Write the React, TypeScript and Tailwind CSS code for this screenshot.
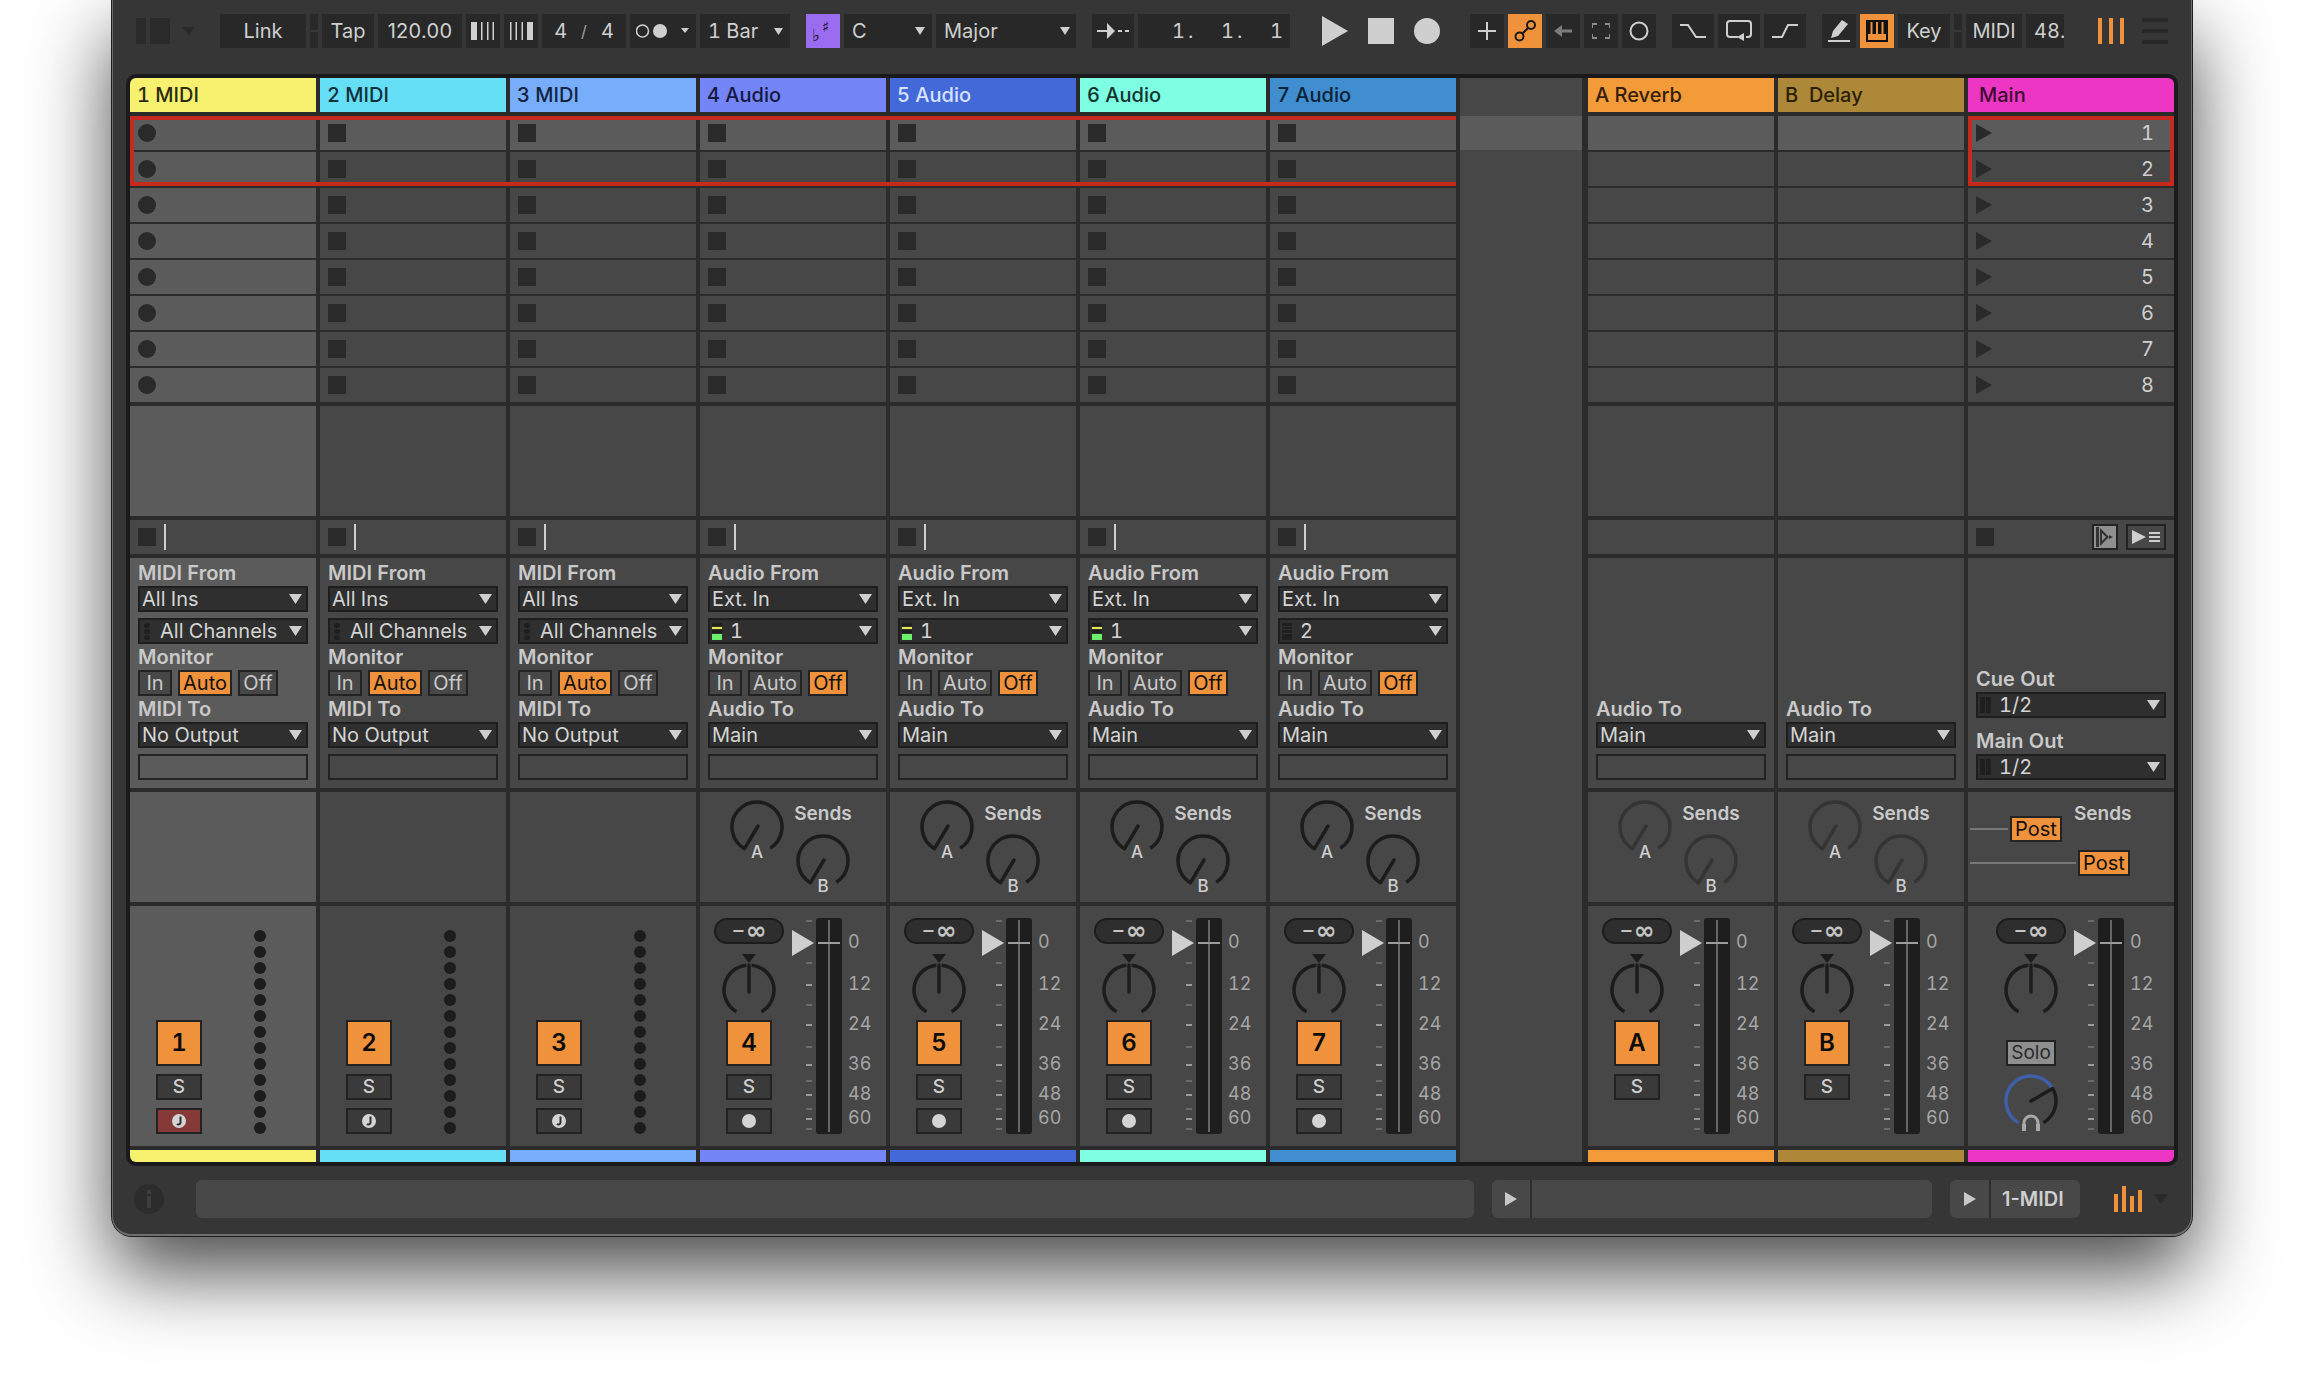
import React from 'react';

const ORANGE = '#f0923b';

type Track = {
  id: string;
  name: string;
  color: string;
  text: string;
  kind: 'midi' | 'audio' | 'return';
  input?: string;
  meter?: 'on' | 'off';
};

const tracks: Track[] = [
  { id: '1', name: '1 MIDI', color: '#f6f270', text: '#2c2b14', kind: 'midi' },
  { id: '2', name: '2 MIDI', color: '#64dff6', text: '#12303a', kind: 'midi' },
  { id: '3', name: '3 MIDI', color: '#77adfb', text: '#14243f', kind: 'midi' },
  { id: '4', name: '4 Audio', color: '#7486f7', text: '#14193f', kind: 'audio', input: '1', meter: 'on' },
  { id: '5', name: '5 Audio', color: '#4368d8', text: '#d8e2ff', kind: 'audio', input: '1', meter: 'on' },
  { id: '6', name: '6 Audio', color: '#7effe3', text: '#12332c', kind: 'audio', input: '1', meter: 'on' },
  { id: '7', name: '7 Audio', color: '#408dcf', text: '#0c2236', kind: 'audio', input: '2', meter: 'off' },
];

const returns: Track[] = [
  { id: 'A', name: 'A Reverb', color: '#f39b39', text: '#33200b', kind: 'return' },
  { id: 'B', name: 'B  Delay', color: '#ad8838', text: '#2a1f08', kind: 'return' },
];

const rows = [1, 2, 3, 4, 5, 6, 7, 8];
const dbLabels = ['0', '12', '24', '36', '48', '60'];
const ticks = [3, 45, 67, 87, 107, 129, 147, 163, 177, 191, 201, 211];
const brightTicks = [67, 107, 147, 177, 201];

function polar(cx: number, cy: number, r: number, deg: number) {
  const a = ((deg - 90) * Math.PI) / 180;
  return { x: cx + r * Math.cos(a), y: cy + r * Math.sin(a) };
}

function arc(cx: number, cy: number, r: number, from: number, to: number) {
  const s = polar(cx, cy, r, from);
  const e = polar(cx, cy, r, to);
  const large = to - from > 180 ? 1 : 0;
  return `M${s.x} ${s.y}A${r} ${r} 0 ${large} 1 ${e.x} ${e.y}`;
}

function Tri({ className = 'w-[11px] h-[8px]', fill = '#cfcfcf' }: { className?: string; fill?: string }) {
  return (
    <svg viewBox="0 0 12 8" preserveAspectRatio="none" className={className}>
      <polygon points="0,0 12,0 6,8" fill={fill} />
    </svg>
  );
}

function PlayTri({ className, fill }: { className: string; fill: string }) {
  return (
    <svg viewBox="0 0 16 18" preserveAspectRatio="none" className={className}>
      <polygon points="0,0 16,9 0,18" fill={fill} />
    </svg>
  );
}

function Btn({ className = '', children }: { className?: string; children?: React.ReactNode }) {
  return (
    <div className={`h-[34px] bg-[#282828] flex items-center justify-center text-[20px] text-[#cfcfcf] shrink-0 ${className}`}>
      {children}
    </div>
  );
}

function SplitIndicator({ className = '' }: { className?: string }) {
  return (
    <div className={`h-[34px] flex flex-col gap-[2px] shrink-0 ${className}`}>
      <div className="h-[16px] bg-[#282828]" />
      <div className="h-[16px] bg-[#282828]" />
    </div>
  );
}

function Toolbar() {
  return (
    <div className="flex items-center gap-[4px] pl-[24px] pt-[14px] h-[48px]">
      <div className="flex gap-[4px] h-[26px] w-[34px] shrink-0">
        <div className="w-[10px] bg-[#2a2a2a]" />
        <div className="w-[20px] bg-[#2a2a2a]" />
      </div>
      <Tri className="ml-[8px] w-[13px] h-[8px] shrink-0" fill="#2a2a2a" />
      <Btn className="ml-[21px] w-[86px]">Link</Btn>
      <SplitIndicator className="w-[8px]" />
      <Btn className="w-[52px]">Tap</Btn>
      <Btn className="w-[84px] [font-variant-numeric:normal] tracking-[0.3px]">120.00</Btn>
      <Btn className="w-[34px]">
        <svg width="24" height="18" viewBox="0 0 24 18" fill="#cfcfcf">
          <rect x="0" width="6" height="18" />
          <rect x="10" width="1.5" height="18" />
          <rect x="16" width="1.5" height="18" />
          <rect x="21.5" width="1.5" height="18" />
        </svg>
      </Btn>
      <Btn className="w-[34px]">
        <svg width="24" height="18" viewBox="0 0 24 18" fill="#cfcfcf">
          <rect x="1" width="1.5" height="18" />
          <rect x="6.5" width="1.5" height="18" />
          <rect x="12.5" width="1.5" height="18" />
          <rect x="18" width="6" height="18" />
        </svg>
      </Btn>
      <Btn className="w-[84px] gap-[14px]">
        <span>4</span>
        <span className="text-[16px] text-[#a0a0a0]">/</span>
        <span>4</span>
      </Btn>
      <Btn className="w-[66px]">
        <svg width="54" height="16" viewBox="0 0 54 16">
          <circle cx="6.5" cy="8" r="6" fill="none" stroke="#cfcfcf" strokeWidth="1.5" />
          <circle cx="24" cy="8" r="7" fill="#cfcfcf" />
          <polygon points="45,5 53,5 49,10" fill="#cfcfcf" />
        </svg>
      </Btn>
      <Btn className="w-[90px] justify-start pl-[8px]">
        <span>1 Bar</span>
        <Tri className="ml-auto mr-[7px] w-[9px] h-[7px]" />
      </Btn>
      <Btn className="ml-[12px] w-[34px] !bg-[#9a6cf0] relative [font-family:'DejaVu_Sans',sans-serif]">
        <span className="absolute left-[6px] top-[11px] text-[17px] font-bold leading-[20px] text-[#15102a]">♭</span>
        <span className="absolute left-[16px] top-[3px] text-[15px] font-bold leading-[20px] text-[#15102a]">♯</span>
      </Btn>
      <Btn className="w-[88px] justify-start pl-[8px]">
        <span>C</span>
        <Tri className="ml-auto mr-[7px] w-[10px] h-[8px]" />
      </Btn>
      <Btn className="w-[140px] justify-start pl-[8px]">
        <span>Major</span>
        <Tri className="ml-auto mr-[6px] w-[10px] h-[8px]" />
      </Btn>
      <Btn className="ml-[12px] w-[42px]">
        <svg width="32" height="16" viewBox="0 0 32 16">
          <path d="M0 8h12" stroke="#cfcfcf" strokeWidth="2" />
          <polygon points="10,0 18,8 10,16" fill="#cfcfcf" />
          <path d="M21 8h4M28 8h4" stroke="#cfcfcf" strokeWidth="2" />
        </svg>
      </Btn>
      <Btn className="w-[152px] justify-start pl-[34px] tracking-[3px]">
        <span className="w-[49px]">1.</span>
        <span className="w-[49px]">1.</span>
        <span>1</span>
      </Btn>
      <svg width="26" height="30" viewBox="0 0 26 30" className="ml-[28px] shrink-0">
        <polygon points="0,0 26,15 0,30" fill="#cfcfcf" />
      </svg>
      <div className="ml-[16px] w-[26px] h-[26px] bg-[#cfcfcf] shrink-0" />
      <div className="ml-[16px] w-[26px] h-[26px] rounded-full bg-[#cfcfcf] shrink-0" />
      <Btn className="ml-[26px] w-[34px]">
        <svg width="18" height="18" viewBox="0 0 18 18" stroke="#cfcfcf" strokeWidth="2">
          <path d="M9 0v18M0 9h18" />
        </svg>
      </Btn>
      <Btn className="w-[34px] !bg-[#f0923b]">
        <svg width="24" height="24" viewBox="0 0 24 24" fill="none" stroke="#1a1a1a" strokeWidth="2">
          <circle cx="6.5" cy="17.5" r="4" />
          <circle cx="18" cy="6" r="4" />
          <path d="M9.5 14.5l5.5-5.5" />
        </svg>
      </Btn>
      <Btn className="w-[34px]">
        <svg width="18" height="12" viewBox="0 0 18 12">
          <polygon points="0,6 8,0 8,12" fill="#7c7c7c" />
          <rect x="7" y="4.5" width="11" height="3" fill="#7c7c7c" />
        </svg>
      </Btn>
      <Btn className="w-[34px]">
        <svg width="18" height="16" viewBox="0 0 18 16" fill="none" stroke="#8c8c8c" strokeWidth="2">
          <path d="M0 5V1h5M13 1h5v4M18 11v4h-5M5 15H0v-4" />
        </svg>
      </Btn>
      <Btn className="w-[34px]">
        <svg width="20" height="20" viewBox="0 0 20 20" fill="none" stroke="#cfcfcf" strokeWidth="2">
          <circle cx="10" cy="10" r="8.5" />
        </svg>
      </Btn>
      <Btn className="ml-[12px] w-[42px]">
        <svg width="26" height="14" viewBox="0 0 26 14" fill="none" stroke="#cfcfcf" strokeWidth="2">
          <path d="M0 1h8l8 12h10" />
        </svg>
      </Btn>
      <Btn className="w-[42px]">
        <svg width="26" height="22" viewBox="0 0 26 22" fill="none" stroke="#cfcfcf" strokeWidth="2">
          <path d="M12 17H4a3 3 0 0 1-3-3V4a3 3 0 0 1 3-3h18a3 3 0 0 1 3 3v10a3 3 0 0 1-3 3h-2" />
          <polygon points="18,13 18,21 11,17" fill="#cfcfcf" stroke="none" />
        </svg>
      </Btn>
      <Btn className="w-[42px]">
        <svg width="26" height="14" viewBox="0 0 26 14" fill="none" stroke="#cfcfcf" strokeWidth="2">
          <path d="M0 13h10l6-12h10" />
        </svg>
      </Btn>
      <Btn className="ml-[12px] w-[34px]">
        <svg width="22" height="22" viewBox="0 0 22 22">
          <polygon points="14,0 20,4 10,16 3,18 5,11" fill="#cfcfcf" />
          <rect x="0" y="20" width="22" height="2" fill="#cfcfcf" />
        </svg>
      </Btn>
      <Btn className="w-[34px] !bg-[#f0923b]">
        <svg width="22" height="22" viewBox="0 0 22 22">
          <rect x="0" y="0" width="22" height="22" fill="#111" />
          <rect x="2" y="14" width="18" height="6" fill="#f0923b" />
          <rect x="4.5" y="2" width="2" height="12" fill="#f0923b" />
          <rect x="10" y="2" width="2" height="12" fill="#f0923b" />
          <rect x="15.5" y="2" width="2" height="12" fill="#f0923b" />
        </svg>
      </Btn>
      <Btn className="w-[52px]">Key</Btn>
      <SplitIndicator className="w-[8px]" />
      <Btn className="w-[56px]">MIDI</Btn>
      <Btn className="w-[38px] justify-start pl-[8px] overflow-hidden">48.</Btn>
      <div className="ml-[30px] flex justify-between w-[26px] h-[26px] shrink-0">
        <div className="w-[4px] bg-[#f0923b]" />
        <div className="w-[4px] bg-[#f0923b]" />
        <div className="w-[4px] bg-[#f0923b]" />
      </div>
      <div className="ml-[14px] flex flex-col justify-between w-[26px] h-[26px] shrink-0">
        <div className="h-[4px] bg-[#282828]" />
        <div className="h-[4px] bg-[#282828]" />
        <div className="h-[4px] bg-[#282828]" />
      </div>
    </div>
  );
}

function Header({ track }: { track: Track }) {
  return (
    <div
      className="h-[34px] px-[7px] text-[20px] font-medium leading-[34px] whitespace-pre"
      style={{ background: track.color, color: track.text }}
    >
      {track.name}
    </div>
  );
}

function ClipRow({ row, light, kind }: { row: number; light: boolean; kind: 'rec' | 'stop' | 'none' }) {
  return (
    <div className={`h-[34px] flex items-center pl-[8px] ${light ? 'bg-[#5b5b5b]' : 'bg-[#474747]'}`} data-row={row}>
      {kind === 'rec' && <div className="w-[18px] h-[18px] rounded-full bg-[#2a2a2a]" />}
      {kind === 'stop' && <div className="w-[18px] h-[18px] bg-[#2a2a2a]" />}
    </div>
  );
}

function Label({ children, className = '' }: { children: React.ReactNode; className?: string }) {
  return <div className={`h-[20px] leading-[20px] text-[20px] font-semibold text-[#c9c9c9] whitespace-nowrap ${className}`}>{children}</div>;
}

function Select({ children, className = '' }: { children: React.ReactNode; className?: string }) {
  return (
    <div className={`h-[26px] border-2 border-[#1e1e1e] bg-[#2f2f2f] flex items-center text-[20px] text-[#d4d4d4] ${className}`}>
      {children}
      <Tri className="ml-auto mr-[4px] w-[13px] h-[10px] shrink-0" />
    </div>
  );
}

function Meter({ state }: { state: 'on' | 'off' | 'midi' }) {
  if (state === 'midi') {
    return (
      <div className="ml-[4px] mr-[10px] flex flex-col gap-[1px] w-[6px]">
        <div className="h-[5px] rounded-full bg-[#1f1f1f]" />
        <div className="h-[5px] rounded-full bg-[#1f1f1f]" />
        <div className="h-[5px] rounded-full bg-[#1f1f1f]" />
      </div>
    );
  }
  return (
    <div className="ml-[2px] mr-[8px] w-[10px] flex flex-col gap-[1px] shrink-0">
      <div className="h-[3px] bg-[#1f1f1f]" />
      <div className={`h-[2px] ${state === 'on' ? 'bg-[#e4e84a]' : 'bg-[#1f1f1f]'}`} />
      <div className="h-[3px] bg-[#1f1f1f]" />
      <div className={`h-[6px] ${state === 'on' ? 'bg-[#6cf06c]' : 'bg-[#1f1f1f]'}`} />
    </div>
  );
}

function Toggle({ active, className, children }: { active?: boolean; className: string; children: React.ReactNode }) {
  return (
    <div className={`h-[26px] border-2 border-[#232323] flex items-center justify-center text-[20px] ${active ? 'bg-[#f0923b] text-[#111]' : 'bg-[#474747] text-[#c9c9c9]'} ${className}`}>
      {children}
    </div>
  );
}

function ToSection({ audio }: { audio?: boolean }) {
  return (
    <>
      <Label className="mt-[3px]">{audio ? 'Audio To' : 'MIDI To'}</Label>
      <Select className="mt-[3px] pl-[2px]">{audio ? 'Main' : 'No Output'}</Select>
      <div className="mt-[6px] h-[26px] border-2 border-[#232323]" />
    </>
  );
}

function Config({ track, light }: { track: Track; light: boolean }) {
  const midi = track.kind === 'midi';
  return (
    <div className={`h-[230px] px-[8px] pt-[5px] flex flex-col ${light ? 'bg-[#5b5b5b]' : 'bg-[#474747]'}`}>
      {track.kind === 'return' ? (
        <div className="mt-auto pb-[8px]">
          <ToSection audio />
        </div>
      ) : (
        <>
          <Label>{midi ? 'MIDI From' : 'Audio From'}</Label>
          <Select className="mt-[3px] pl-[2px]">{midi ? 'All Ins' : 'Ext. In'}</Select>
          <Select className="mt-[6px]">
            <Meter state={midi ? 'midi' : (track.meter as 'on' | 'off')} />
            {midi ? 'All Channels' : track.input}
          </Select>
          <Label className="mt-[3px]">Monitor</Label>
          <div className="mt-[3px] flex gap-[6px]">
            <Toggle className="w-[34px]">In</Toggle>
            <Toggle className="w-[54px]" active={midi}>Auto</Toggle>
            <Toggle className="w-[40px]" active={!midi}>Off</Toggle>
          </div>
          <ToSection audio={!midi} />
        </>
      )}
    </div>
  );
}

function SendKnob({ dim }: { dim: boolean }) {
  const color = dim ? '#343434' : '#1c1c1c';
  const p = polar(30, 30, 25, -150);
  return (
    <svg width="60" height="60" viewBox="0 0 60 60" className="block">
      <path d={arc(30, 30, 25, -148, 148)} fill="none" stroke={color} strokeWidth="3.5" />
      <path d={`M31 29L${p.x} ${p.y}`} stroke={color} strokeWidth="3.5" strokeLinecap="round" />
    </svg>
  );
}

function Sends({ track, light }: { track: Track; light: boolean }) {
  const dim = track.kind === 'return';
  return (
    <div className={`h-[110px] flex ${light ? 'bg-[#5b5b5b]' : 'bg-[#474747]'}`}>
      {track.kind !== 'midi' && (
        <>
          <div className="ml-[27px] pt-[5px] w-[60px] flex flex-col items-center">
            <SendKnob dim={dim} />
            <span className="-mt-[14px] h-[18px] leading-[18px] text-[17px] font-medium text-[#cfcfcf]">A</span>
          </div>
          <div className="ml-[6px] pt-[12px] w-[60px] flex flex-col items-center">
            <div className="h-[20px] leading-[20px] text-[19px] font-semibold text-[#c9c9c9]">Sends</div>
            <div className="mt-[7px]">
              <SendKnob dim={dim} />
            </div>
            <span className="-mt-[14px] h-[18px] leading-[18px] text-[17px] font-medium text-[#cfcfcf]">B</span>
          </div>
        </>
      )}
    </div>
  );
}

function Fader() {
  return (
    <svg width="50" height="216" viewBox="0 0 50 216" className="shrink-0 block">
      {ticks.map((y) => (
        <rect key={y} x="14" y={y - 1} width="6" height="2" fill={brightTicks.includes(y) ? '#9a9a9a' : '#6c6c6c'} />
      ))}
      <rect x="24" y="0" width="26" height="216" rx="3" fill="#1e1e1e" />
      <rect x="36" y="2" width="2" height="212" fill="#666" />
      <rect x="26" y="24" width="22" height="2" fill="#9c9c9c" />
      <polygon points="0,12 22,25 0,38" fill="#cfcfcf" />
    </svg>
  );
}

function DbScale() {
  return (
    <div className="ml-[6px] pt-[14px] grid grid-rows-[42px_40px_40px_30px_24px_24px] text-[18px] leading-[20px] text-[#a6a6a6]">
      {dbLabels.map((l) => (
        <span key={l}>{l}</span>
      ))}
    </div>
  );
}

function Pill() {
  return (
    <div className="h-[26px] w-[70px] rounded-full bg-[#2e2e2e] border-2 border-[#1c1c1c] flex items-center justify-center text-[#c4c4c4] font-bold leading-none [font-family:'DejaVu_Sans',sans-serif]">
      <span className="text-[16px] mr-[1px]">−</span>
      <span className="text-[25px] -mt-[2px]">∞</span>
    </div>
  );
}

function PanKnob() {
  return (
    <svg width="70" height="66" viewBox="0 0 70 66" className="block mt-[10px] shrink-0">
      <polygon points="28,0 42,0 35,9" fill="#1c1c1c" />
      <path d={arc(35, 36, 25, -150, -6)} fill="none" stroke="#1c1c1c" strokeWidth="3.5" />
      <path d={arc(35, 36, 25, 6, 150)} fill="none" stroke="#1c1c1c" strokeWidth="3.5" />
      <path d="M35 11V38" stroke="#1c1c1c" strokeWidth="3.5" strokeLinecap="round" />
    </svg>
  );
}

function CueKnob() {
  const p = polar(35, 30, 25, 60);
  return (
    <svg width="70" height="63" viewBox="0 0 70 63" className="block mt-[5px] shrink-0 overflow-visible">
      <path d={arc(35, 30, 25, -150, 58)} fill="none" stroke="#3f5fa8" strokeWidth="3.5" />
      <path d={arc(35, 30, 25, 62, 150)} fill="none" stroke="#1c1c1c" strokeWidth="3.5" />
      <path d={`M35 30L${p.x} ${p.y}`} stroke="#1c1c1c" strokeWidth="3.5" strokeLinecap="round" />
      <circle cx="35" cy="51" r="9.5" fill="#474747" />
      <path d="M28 58v-6a7 7 0 0 1 14 0v6" fill="none" stroke="#a8a8a8" strokeWidth="3" />
      <rect x="26" y="53" width="4" height="7" fill="#a8a8a8" />
      <rect x="40" y="53" width="4" height="7" fill="#a8a8a8" />
    </svg>
  );
}

function ClockDot() {
  return (
    <svg width="14" height="14" viewBox="0 0 14 14">
      <circle cx="7" cy="7" r="7" fill="#d4d4d4" />
      <path d="M8.5 2.5V8.5a2 2 0 0 1-3.5 1.4" fill="none" stroke="#2f2f2f" strokeWidth="2" />
    </svg>
  );
}

function Mixer({ track, light }: { track: Track; light: boolean }) {
  const midi = track.kind === 'midi';
  const ret = track.kind === 'return';
  return (
    <div className={`h-[240px] flex pl-[14px] pt-[12px] ${light ? 'bg-[#5b5b5b]' : 'bg-[#474747]'}`}>
      <div className="w-[70px] h-[216px] flex flex-col items-center">
        {!midi && <Pill />}
        {!midi && <PanKnob />}
        <div className="mt-auto flex flex-col gap-[8px]">
          <div className="w-[46px] h-[46px] border-2 border-[#222] bg-[#f0923b] flex items-center justify-center text-[24px] font-semibold text-[#0c0c0c]">
            {track.id}
          </div>
          <div className="w-[46px] h-[26px] border-2 border-[#222] bg-[#3a3a3a] flex items-center justify-center text-[19px] font-medium text-[#cfcfcf]">
            S
          </div>
          {ret ? (
            <div className="h-[26px]" />
          ) : (
            <div className={`w-[46px] h-[26px] border-2 border-[#222] flex items-center justify-center ${track.id === '1' ? 'bg-[#853a38]' : 'bg-[#3a3a3a]'}`}>
              {midi ? <ClockDot /> : <div className="w-[14px] h-[14px] rounded-full bg-[#d4d4d4]" />}
            </div>
          )}
        </div>
      </div>
      {midi ? (
        <div className="ml-[40px] mt-[12px] flex flex-col gap-[4px]">
          {[0, 1, 2, 3, 4, 5, 6, 7, 8, 9, 10, 11, 12].map((i) => (
            <div key={i} className="w-[12px] h-[12px] rounded-full bg-[#1c1c1c]" />
          ))}
        </div>
      ) : (
        <>
          <div className="ml-[8px]">
            <Fader />
          </div>
          <DbScale />
        </>
      )}
    </div>
  );
}

function StripColumn({ track, light }: { track: Track; light: boolean }) {
  return (
    <div className="w-[186px] flex flex-col gap-[4px] shrink-0">
      <Header track={track} />
      <div className="flex flex-col gap-[2px]">
        {rows.map((r) => (
          <ClipRow
            key={r}
            row={r}
            light={light || r === 1}
            kind={track.id === '1' ? 'rec' : track.kind === 'return' ? 'none' : 'stop'}
          />
        ))}
      </div>
      <div className={`h-[110px] ${light ? 'bg-[#5b5b5b]' : 'bg-[#474747]'}`} />
      <div className="h-[34px] bg-[#474747] flex items-center pl-[8px]">
        {track.kind !== 'return' && (
          <>
            <div className="w-[18px] h-[18px] bg-[#2a2a2a]" />
            <div className="ml-[8px] w-[2px] h-[26px] bg-[#cfcfcf]" />
          </>
        )}
      </div>
      <Config track={track} light={light} />
      <Sends track={track} light={light} />
      <Mixer track={track} light={light} />
      <div className="h-[12px]" style={{ background: track.color }} />
    </div>
  );
}

function EmptyColumn() {
  return (
    <div className="w-[122px] shrink-0 flex flex-col bg-[#474747]">
      <div className="h-[38px]" />
      <div className="h-[34px] bg-[#5b5b5b]" />
    </div>
  );
}

function MainColumn() {
  return (
    <div className="w-[206px] flex flex-col gap-[4px] shrink-0">
      <div className="h-[34px] pl-[11px] bg-[#ee36c5] text-[#3b0c31] text-[20px] font-medium leading-[34px]">Main</div>
      <div className="flex flex-col gap-[2px]">
        {rows.map((r) => (
          <div key={r} className={`h-[34px] flex items-center pl-[8px] pr-[20px] ${r === 1 ? 'bg-[#5b5b5b]' : 'bg-[#474747]'}`}>
            <PlayTri className="w-[16px] h-[18px]" fill="#2a2a2a" />
            <span className="ml-auto text-[20px] text-[#cfcfcf]">{r}</span>
          </div>
        ))}
      </div>
      <div className="h-[110px] bg-[#474747]" />
      <div className="h-[34px] bg-[#474747] flex items-center pl-[8px] pr-[8px]">
        <div className="w-[18px] h-[18px] bg-[#2a2a2a]" />
        <div className="ml-auto w-[26px] h-[26px] border-2 border-[#222] bg-[#8f8f8f] flex items-center justify-center">
          <svg width="18" height="20" viewBox="0 0 18 20">
            <polygon points="4,1 13,10 4,19" fill="#333" />
            <rect x="0" y="0" width="3" height="20" fill="#333" />
            <polygon points="6,6 10,10 6,14" fill="#8f8f8f" />
            <polygon points="13,8 17,10 13,12" fill="#333" />
          </svg>
        </div>
        <div className="ml-[8px] w-[40px] h-[26px] border-2 border-[#222] bg-[#474747] flex items-center justify-center">
          <svg width="28" height="16" viewBox="0 0 28 16" fill="#cfcfcf">
            <polygon points="0,1 14,8 0,15" />
            <rect x="17" y="3" width="11" height="2" />
            <rect x="17" y="7" width="11" height="2" />
            <rect x="17" y="11" width="11" height="2" />
          </svg>
        </div>
      </div>
      <div className="h-[230px] bg-[#474747] px-[8px] pb-[8px] flex flex-col justify-end">
        <Label>Cue Out</Label>
        <Select className="mt-[3px]">
          <div className="ml-[2px] mr-[8px] w-[11px] h-[16px] flex gap-[1px]">
            <div className="w-[5px] bg-[#1f1f1f]" />
            <div className="w-[5px] bg-[#1f1f1f]" />
          </div>
          1/2
        </Select>
        <Label className="mt-[13px]">Main Out</Label>
        <Select className="mt-[3px]">
          <div className="ml-[2px] mr-[8px] w-[11px] h-[16px] flex gap-[1px]">
            <div className="w-[5px] bg-[#1f1f1f]" />
            <div className="w-[5px] bg-[#1f1f1f]" />
          </div>
          1/2
        </Select>
      </div>
      <div className="h-[110px] bg-[#474747] flex flex-col">
        <div className="pl-[106px] pt-[12px] h-[31px] leading-[20px] text-[19px] font-semibold text-[#c9c9c9]">Sends</div>
        <div className="-mt-[7px] h-[26px] flex items-center pl-[2px]">
          <div className="w-[38px] h-[2px] bg-[#777]" />
          <Toggle active className="ml-[2px] w-[52px]">Post</Toggle>
        </div>
        <div className="mt-[8px] h-[26px] flex items-center pl-[2px]">
          <div className="w-[106px] h-[2px] bg-[#777]" />
          <Toggle active className="ml-[2px] w-[52px]">Post</Toggle>
        </div>
      </div>
      <div className="h-[240px] bg-[#474747] flex pl-[28px] pt-[12px]">
        <div className="w-[70px] h-[216px] flex flex-col items-center">
          <Pill />
          <PanKnob />
          <div className="mt-[20px] w-[50px] h-[26px] border-2 border-[#222] bg-[#8f8f8f] flex items-center justify-center text-[19px] text-[#2a2a2a]">
            Solo
          </div>
          <CueKnob />
        </div>
        <div className="ml-[8px]">
          <Fader />
        </div>
        <DbScale />
      </div>
      <div className="h-[12px] bg-[#ee36c5]" />
    </div>
  );
}

function Session() {
  return (
    <div className="relative flex">
      <div className="flex gap-[4px]">
        {tracks.map((t) => (
          <StripColumn key={t.id} track={t} light={t.id === '1'} />
        ))}
      </div>
      <div className="ml-[4px] flex gap-[6px]">
        <EmptyColumn />
        <div className="flex gap-[4px]">
          {returns.map((t) => (
            <StripColumn key={t.id} track={t} light={false} />
          ))}
          <MainColumn />
        </div>
      </div>
      {/* session box */}
      <div className="absolute left-0 top-[38px] w-[1326px] h-[70px] border-y-4 border-l-4 border-[#c8291e]" />
      <div className="absolute right-0 top-[38px] w-[206px] h-[70px] border-4 border-[#c8291e]" />
    </div>
  );
}

function BottomBar() {
  return (
    <div className="mt-[14px] h-[38px] flex items-center">
      <div className="ml-[22px] w-[30px] h-[30px] rounded-full bg-[#2c2c2c] flex flex-col items-center justify-center gap-[2px]">
        <div className="w-[4px] h-[4px] bg-[#3e3e3e]" />
        <div className="w-[4px] h-[12px] bg-[#3e3e3e]" />
      </div>
      <div className="ml-[32px] w-[1278px] h-[38px] rounded-[6px] bg-[#484848]" />
      <div className="ml-[18px] w-[440px] h-[38px] rounded-[6px] bg-[#484848] flex items-center">
        <div className="w-[38px] flex justify-center">
          <PlayTri className="w-[12px] h-[14px]" fill="#c8c8c8" />
        </div>
        <div className="w-[2px] h-[38px] bg-[#2e2e2e]" />
      </div>
      <div className="ml-[18px] w-[130px] h-[38px] rounded-[6px] bg-[#484848] flex items-center">
        <div className="w-[39px] flex justify-center">
          <PlayTri className="w-[12px] h-[14px]" fill="#c8c8c8" />
        </div>
        <div className="w-[2px] h-[38px] bg-[#2e2e2e]" />
        <span className="ml-[11px] text-[20px] font-semibold text-[#cfcfcf] [font-variant-numeric:normal]">1-MIDI</span>
      </div>
      <svg width="28" height="26" viewBox="0 0 28 26" className="ml-[34px] shrink-0" fill={ORANGE}>
        <rect x="0" y="8" width="4" height="18" />
        <rect x="8" y="0" width="4" height="26" />
        <rect x="16" y="10" width="4" height="16" />
        <rect x="24" y="4" width="4" height="22" />
      </svg>
      <Tri className="ml-[12px] w-[14px] h-[10px] shrink-0" fill="#2a2a2a" />
    </div>
  );
}

export default function App() {
  return (
    <div className="w-[2304px] h-[1384px] overflow-hidden bg-white tabular-nums [font-family:Inter,sans-serif]">
      <div className="ml-[112px] w-[2080px] h-[1236px] bg-[#363636] rounded-b-[20px] shadow-[inset_1px_0_0_#6e6e6e,inset_-1px_0_0_#6e6e6e,inset_0_-2px_0_#6e6e6e,0_0_0_1px_#1e1e1e,0_36px_80px_rgba(0,0,0,0.72)]">
        <Toolbar />
        <div className="mt-[26px] ml-[14px] w-[2052px] border-4 border-[#1a1a1a] rounded-[10px] bg-[#2b2b2b] overflow-hidden">
          <Session />
        </div>
        <BottomBar />
      </div>
    </div>
  );
}
